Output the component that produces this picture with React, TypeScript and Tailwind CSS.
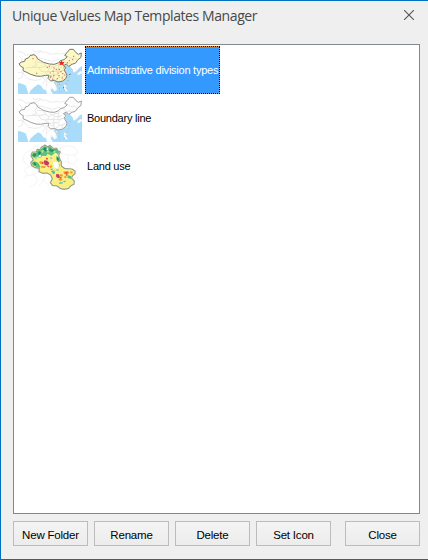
import React from 'react';

const OUTLINE =
  'M27 71L35 66L44 64L46 57L55 54L60 47L72 44L80 50L82 56L92 62L100 67L118 72L133 73L146 68L151 62L162 59L172 50L164 46L171 38L179 28L190 28L198 38L205 43L214 39L213 52L203 60L197 69L186 73L176 79L169 72L160 77L168 83L162 90L168 99L171 106L167 116L158 123L144 126L133 121L122 123L114 115L117 106L106 106L92 109L78 108L62 103L48 96L39 92L40 83L32 79Z';
const PROVINCES =
  'M82 57L75 68L80 76L66 82L47 84M66 82L86 82L94 94L106 96L117 106M80 66L101 69L107 79L94 82L86 82M107 79L117 86L113 95L106 96M117 86L128 80L134 85L129 94L113 95M118 73L125 80M128 80L145 75L149 69M134 85L146 86L156 82M145 75L146 86L142 95L129 94M142 95L153 93L162 90M129 94L132 104L117 107M132 104L144 104L153 93M144 104L148 113L138 120M132 104L132 120M148 113L158 110L168 105M158 110L157 122M160 61L169 71L180 69L189 73M172 50L181 55L194 55L203 60M122 113L132 112';
const DOTS = [[69, 56], [80, 100], [112, 82], [118, 79], [132, 84], [121, 99], [129, 94], [139, 89], [148, 89], [153, 95], [144, 99], [158, 101], [131, 107], [147, 107], [121, 113], [142, 116], [157, 114], [164, 105], [178, 62], [188, 59], [191, 49], [172, 68], [128, 118], [162, 84]];

function ChinaMap({ filled }: { filled: boolean }) {
  return (
    <svg className="block h-[46px] w-[64px] shrink-0" viewBox="24 24 192 138" preserveAspectRatio="none">
      <path fill="#fff" d="M24 24h192v138H24z" />
      <path
        fill="#a9dcfb"
        d="M216 78L208 83L199 94L194 88L194 77L190 72L176 79L169 72L160 78L170 84L163 91L171 103L169 115L157 123L144 126L134 122L130 126L138 137L141 149L134 154L126 144L122 151L128 162H216ZM24 128L38 132L48 137L52 151L55 162H24ZM57 162L63 150L76 139L85 133L94 138L99 147L108 151L111 162Z"
      />
      <path
        fill="#fff"
        stroke="#dce5e8"
        d="M184 72L193 71L197 85L198 96L190 97L188 88L180 80ZM202 101L211 93L216 95V99L205 106ZM163 132L170 139L167 145L173 153L168 155L162 145ZM117 126L130 125L135 135L139 147L132 152L124 141L118 153L123 162H113L107 145Z"
      />
      <path
        fill="none"
        stroke="#dedede"
        strokeWidth="1.8"
        d="M24 34L39 37L46 46L62 43L79 42L91 35L109 37L125 43L142 40L154 43L171 37M83 52L101 57L127 64L150 57M24 98L38 96L44 106L57 118L75 121L89 119L100 111L105 121L98 132M27 49L37 57L33 67M38 96L37 111L24 117M106 108L111 123L107 139M67 30L76 35L94 31"
      />
      <path fill={filled ? '#fdf9c6' : '#fdfdfd'} stroke={filled ? '#77776d' : '#a0a0a0'} strokeWidth="3" strokeLinejoin="round" d={OUTLINE} />
      <path fill="none" stroke={filled ? '#d4d1ab' : '#d1d1d1'} strokeWidth="1.5" d={PROVINCES} />
      <path fill={filled ? '#fdf9c6' : '#fff'} stroke="#b0b0a0" d="M170 116l4-1-2 9-3-2ZM136 130l6-1 1 4-5 2Z" />
      {filled && (
        <g>
          {DOTS.map(([x, y]) => (
            <path key={`${x}-${y}`} fill="#f0705f" d={`M${x - 1.8} ${y - 1.8}h3.6v3.6h-3.6z`} />
          ))}
          <path fill="#e9291f" d="M154 60l3 6 6 0-3 5 1 4-6-1-7 2 2-5-3-4 5-1Z" />
          <path fill="#555" d="M121 107h3v3h-3zM178 102h3v3h-3zM159 142h3v3h-3z" />
          <path fill="#d6c94e" d="M171 119h3v4h-3zM165 130h3v3h-3zM146 132h3v3h-3z" />
        </g>
      )}
      <path
        fill="none"
        stroke="#7ab3d1"
        strokeWidth="2"
        strokeDasharray="3 8"
        d="M181 99L177 116L172 129L166 143L160 158M148 132L149 158"
      />
    </svg>
  );
}

function LandUseMap() {
  return (
    <svg className="block h-[46px] w-[64px] shrink-0" viewBox="24 13 192 138" preserveAspectRatio="none">
      <path fill="#fff" d="M24 13h192v138H24z" />
      <path
        fill="none"
        stroke="#ececec"
        strokeWidth="1.8"
        d="M39 51L49 38L66 30L75 19L96 24M39 51L42 66L58 79L43 91L52 108L39 119M58 79L74 87L92 92L105 108L100 123L86 140M52 108L72 105L83 117L76 134L60 142M72 105L92 92M124 20L145 15L151 24L173 18L194 23L204 39L192 46L202 60L190 75L204 86L194 103L206 117M151 24L153 42L174 46L192 46M174 46L175 67L190 75M160 65L175 67L181 85L194 103M160 75L166 90L181 85M192 115L206 117M100 123L118 137"
      />
      <path
        fill="#f9ef82"
        stroke="#9a9f8f"
        strokeWidth="3.5"
        strokeLinejoin="round"
        d="M63 48L67 37L78 37L82 29L90 30L95 22L105 16L113 22L120 17L128 25L141 26L142 32L151 37L146 47L149 57L154 66L154 79L163 86L186 88L195 94L195 102L187 109L185 116L193 124L192 134L183 138L176 146L162 149L150 146L141 139L127 137L121 129L127 117L122 106L111 100L98 101L87 96L88 86L76 84L65 78L62 69L70 61Z"
      />
      <path
        fill="#5cc082"
        d="M65 48L69 39L79 39L83 31L91 32L97 24L105 19L112 24L120 19L127 27L140 28L148 38L144 44L132 42L124 48L113 42L108 49L97 48L91 55L82 51L73 56ZM65 69L74 65L84 69L92 82L87 85L68 77ZM138 50L147 53L151 65L145 68L140 61ZM123 95L132 92L136 100L130 104ZM174 107L184 110L182 118L172 114Z"
      />
      <path
        fill="#258c63"
        d="M71 41l9 2-5 8-8-3ZM86 34l8 4-5 8-6-4ZM103 22l9 5-4 9-9-5ZM119 23l5 7 9-1-4 8-11-3ZM70 68l7 1 2 8-7-1ZM142 51l5 8-3 6-4-6Z"
      />
      <path
        fill="#a9df90"
        d="M96 30l6 2-3 8-6-2ZM112 32l6 1-3 7-5-2ZM131 33l7 2-4 6-5-3ZM75 53l6-2 1 6-6 3ZM146 70l5 7-4 6-4-7ZM138 87l9 2-1 6-9-2Z"
      />
      <path
        fill="#fff"
        d="M130 67l14 1 3 12-7 7-9-5ZM87 46l6 1-1 6-6-1ZM111 25l5 2-3 5-4-2ZM134 40l7 1-2 4-5-1Z"
      />
      <path fill="#c03b68" d="M103 62l9 1 6 7-4 8-10-3-3-8ZM138 104l7-1 5 6-3 7-8-3Z" />
      <path
        fill="#f39a36"
        d="M89 65h7l5 4-6 5-7-3ZM94 78l8 2 6-2-3 7-11-1ZM118 79l7-3 2 6-6 4ZM160 96l14-2 4 5-6 6-10-2ZM151 103l8 2-2 6-8-2ZM145 118l10-2 3 5-8 4ZM163 109l7 1-1 5-7-1ZM181 95l7 1-1 6-7-2Z"
      />
      <path
        fill="#e25533"
        d="M96 67l5 1-1 6-5-2ZM108 54l6 1-1 5-5-1ZM113 79l4-1v5l-5-1ZM166 97l9 1-5 4-7-2ZM149 111l7 2-4 4-5-2ZM169 103l5 2-3 4-4-2Z"
      />
      <path fill="#53bcd8" d="M121 88l6-2 1 5-6 1ZM146 129l11-2 2 4-10 2ZM160 124l7-1v4l-6 1ZM122 53l4 1-1 4-4-1Z" />
    </svg>
  );
}

function DialogButton({ label, className = '' }: { label: string; className?: string }) {
  return (
    <button
      className={`flex h-[25px] w-[75px] items-center justify-center border border-[#bcbcbc] bg-linear-to-b from-[#f4f4f4] to-[#ececec] pt-[2px] text-[11.5px] leading-[14px] tracking-[-0.2px] text-black ${className}`}
    >
      {label}
    </button>
  );
}

export default function App() {
  return (
    <main className="flex h-[560px] w-[428px] flex-col border-y border-l border-[#0070c0] bg-[#efefef] pr-2 pl-3 font-['Liberation_Sans',sans-serif]">
      <header className="flex h-[43px] shrink-0 items-start justify-between pt-[4px] pr-[6px]">
        <h1 className="-ml-px font-['Open_Sans',sans-serif] text-[14px] leading-[21px] font-normal tracking-[-0.41px] whitespace-nowrap text-[#484848]">
          Unique Values Map Templates Manager
        </h1>
        <button aria-label="Close" className="mt-[5px]">
          <svg className="h-[10px] w-[10px]" viewBox="0 0 10 10">
            <path d="M0 0L10 10M10 0L0 10" fill="none" stroke="#555" strokeWidth="1.1" />
          </svg>
        </button>
      </header>
      <section className="flex h-[470px] w-[407px] shrink-0 flex-col border border-[#828790] bg-white pt-px pl-1 text-[11px] leading-[14px] tracking-[-0.24px] text-black">
        <div className="flex h-12 items-end gap-[3px]">
          <ChinaMap filled />
          <div className="h-12 w-[135px] border border-dotted border-black bg-[#e69138]">
            <div className="flex h-full items-center bg-[#3399ff] pl-px whitespace-nowrap text-white">
              Administrative division types
            </div>
          </div>
        </div>
        <div className="flex h-12 items-end gap-[5px]">
          <ChinaMap filled={false} />
          <span className="self-center">Boundary line</span>
        </div>
        <div className="flex h-12 items-end gap-[5px]">
          <LandUseMap />
          <span className="self-center">Land use</span>
        </div>
      </section>
      <footer className="mt-[7px] flex gap-[6px]">
        <DialogButton label="New Folder" />
        <DialogButton label="Rename" />
        <DialogButton label="Delete" />
        <DialogButton label="Set Icon" />
        <DialogButton label="Close" className="ml-2" />
      </footer>
    </main>
  );
}
